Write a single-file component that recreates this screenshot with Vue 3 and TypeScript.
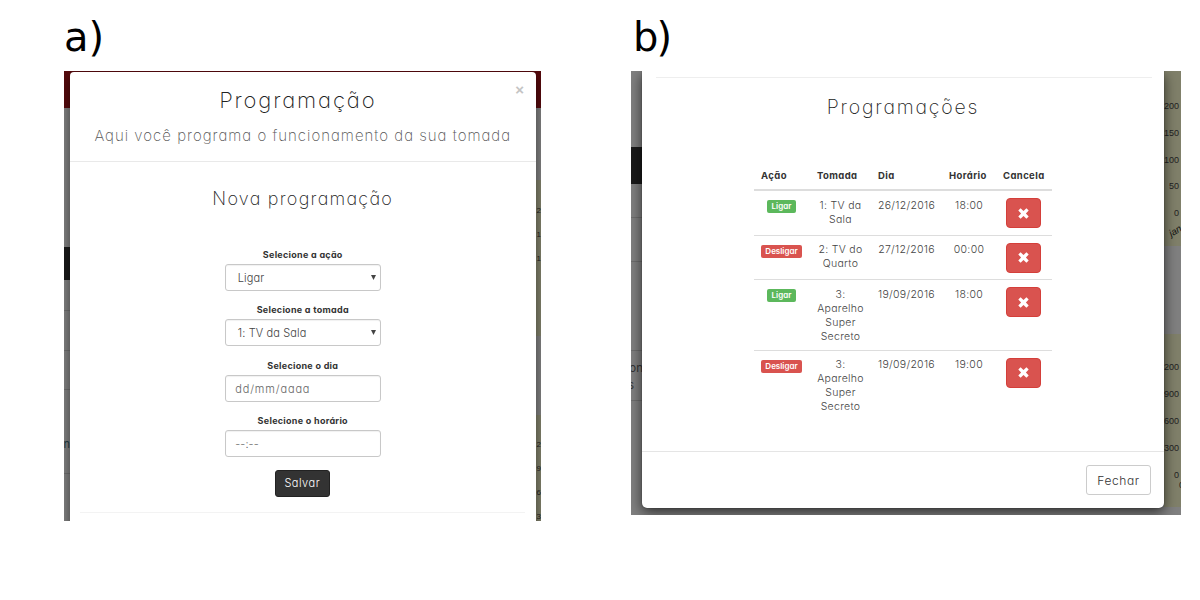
<script setup lang="ts">
interface Field {
  label: string
  value: string
  kind: 'select' | 'input'
}
interface Schedule {
  action: 'Ligar' | 'Desligar'
  outlet: string[]
  day: string
  time: string
}
interface AxisLabel {
  text: string
  y: number
}

const fields: Field[] = [
  { label: 'Selecione a ação', value: 'Ligar', kind: 'select' },
  { label: 'Selecione a tomada', value: '1: TV da Sala', kind: 'select' },
  { label: 'Selecione o dia', value: 'dd/mm/aaaa', kind: 'input' },
  { label: 'Selecione o horário', value: '--:--', kind: 'input' },
]

const schedules: Schedule[] = [
  { action: 'Ligar', outlet: ['1: TV da', 'Sala'], day: '26/12/2016', time: '18:00' },
  { action: 'Desligar', outlet: ['2: TV do', 'Quarto'], day: '27/12/2016', time: '00:00' },
  { action: 'Ligar', outlet: ['3:', 'Aparelho', 'Super', 'Secreto'], day: '19/09/2016', time: '18:00' },
  { action: 'Desligar', outlet: ['3:', 'Aparelho', 'Super', 'Secreto'], day: '19/09/2016', time: '19:00' },
]

const formAxis: AxisLabel[] = [
  { text: '2', y: 140 },
  { text: '1', y: 164 },
  { text: '1', y: 188 },
  { text: '2', y: 374 },
  { text: '9', y: 398 },
  { text: '6', y: 422 },
  { text: '3', y: 446 },
]
const listAxis: AxisLabel[] = [
  { text: '200', y: 35 },
  { text: '150', y: 62 },
  { text: '100', y: 89 },
  { text: '50', y: 115 },
  { text: '0', y: 142 },
  { text: '200', y: 296 },
  { text: '900', y: 323 },
  { text: '600', y: 350 },
  { text: '300', y: 377 },
  { text: '0', y: 404 },
]
</script>

<template>
  <main class="page">
    <figure class="figure figure-form">
      <figcaption>a)</figcaption>
      <section class="panel">
        <div class="backdrop">
          <div class="side side-left">
            <i class="dark"></i><i class="rule r1"></i><i class="rule r2"></i><i class="rule r3"></i><i class="rule r4"></i>
            <span class="cut">n</span>
          </div>
          <div class="side side-right">
            <i class="chart c1"></i><i class="chart c2"></i>
            <span v-for="a in formAxis" :key="a.y" class="axis" :style="{ top: a.y + 'px' }">{{ a.text }}</span>
          </div>
        </div>
        <div class="modal">
          <header>
            <span class="close">×</span>
            <h1>Programação</h1>
            <p>Aqui você programa o funcionamento da sua tomada</p>
          </header>
          <h2>Nova programação</h2>
          <form @submit.prevent>
            <div v-for="f in fields" :key="f.label" class="field">
              <label>{{ f.label }}</label>
              <div class="control" :class="f.kind">
                <span>{{ f.value }}</span>
                <svg v-if="f.kind === 'select'" viewBox="0 0 5 5"><path d="M0 0h5L2.5 5z" /></svg>
              </div>
            </div>
            <button class="save" type="submit">Salvar</button>
          </form>
          <hr />
        </div>
      </section>
    </figure>

    <figure class="figure figure-list">
      <figcaption>b)</figcaption>
      <section class="panel">
        <div class="backdrop">
          <div class="side side-left">
            <i class="dark"></i><i class="rule r1"></i><i class="rule r2"></i><i class="rule r3"></i><i class="rule r4"></i>
            <span class="cut">on</span><span class="cut second">s</span>
          </div>
          <div class="side side-right">
            <i class="chart c1"></i><i class="chart c2"></i>
            <span v-for="a in listAxis" :key="a.y" class="axis" :style="{ top: a.y + 'px' }">{{ a.text }}</span>
            <span class="month">jan</span><span class="axis edge">0</span>
          </div>
        </div>
        <div class="modal">
          <hr />
          <h2>Programações</h2>
          <table>
            <thead>
              <tr><th>Ação</th><th>Tomada</th><th>Dia</th><th>Horário</th><th>Cancela</th></tr>
            </thead>
            <tbody>
              <tr v-for="(s, i) in schedules" :key="i">
                <td><span class="badge" :class="s.action.toLowerCase()">{{ s.action }}</span></td>
                <td class="text"><div v-for="line in s.outlet" :key="line">{{ line }}</div></td>
                <td class="text">{{ s.day }}</td>
                <td class="text">{{ s.time }}</td>
                <td>
                  <button class="cancel" type="button">
                    <svg viewBox="0 0 11 11"><path d="M2.6.3 5.5 3.1 8.4.3 10.7 2.6 7.9 5.5l2.8 2.9-2.3 2.3-2.9-2.8-2.9 2.8L.3 8.4l2.8-2.9L.3 2.6z" /></svg>
                  </button>
                </td>
              </tr>
            </tbody>
          </table>
          <footer><button class="dismiss" type="button">Fechar</button></footer>
        </div>
      </section>
    </figure>
  </main>
</template>

<style>
body { margin: 0; background: #fff; }
</style>

<style scoped>
* { box-sizing: border-box; }
.page {
  display: flex;
  width: 1200px;
  height: 600px;
  padding-left: 64px;
  overflow: hidden;
  background: #fff;
  color: #333;
  font-family: Inter, "Liberation Sans", sans-serif;
  font-feature-settings: "cv11";
  font-weight: 200;
}
.figure { margin: 0; }
.figure-form { width: 477px; margin-right: 90px; }
.figure-list { width: 550px; }
figcaption {
  height: 71px;
  padding-top: 13px;
  color: #000;
  font: 400 40px/48px "DejaVu Sans", sans-serif;
  white-space: nowrap;
}
.figure-list figcaption { padding-left: 2px; letter-spacing: -2px; }
.panel { position: relative; overflow: hidden; background: #808080; }
.figure-form .panel { height: 450px; }
.figure-list .panel { height: 444px; }
.modal { position: relative; background: #fff; }
h1, h2, p { margin: 0; font-weight: 200; text-align: center; white-space: nowrap; }
h1, h2 { color: #222; }
hr { margin: 0; border: 0; border-top: 1px solid #eee; }
button { display: block; padding: 0; font: inherit; }

/* page visible behind the dialogs */
.backdrop, .side { position: absolute; top: 0; bottom: 0; }
.backdrop { left: 0; right: 0; }
.side-left { left: 0; }
.side-right { right: 0; }
.figure-form .side { width: 6px; }
.figure-list .side-left { width: 12px; }
.figure-list .side-right { width: 17px; }
.side i { position: absolute; left: 0; right: 0; }
.figure-form .backdrop { background: linear-gradient(#560a0d 37px, transparent 37px); }
.chart { background: #80806a; }
.dark { background: #1a1a1a; }
.rule { height: 1px; background: #6e6e6e; }
.figure-form .dark { top: 176px; height: 33px; }
.figure-form .r1 { top: 239px; }
.figure-form .r2 { top: 279px; }
.figure-form .r3 { top: 318px; }
.figure-form .r4 { top: 402px; }
.figure-form .c1 { top: 109px; height: 156px; }
.figure-form .c2 { top: 344px; height: 106px; }
.figure-list .dark { top: 76px; height: 37px; }
.figure-list .r1 { top: 146px; }
.figure-list .r2 { top: 190px; }
.figure-list .r3 { top: 279px; }
.figure-list .r4 { top: 329px; }
.figure-list .c1 { top: 0; height: 175px; }
.figure-list .c2 { top: 263px; height: 173px; }
.axis, .cut, .month { position: absolute; line-height: 10px; white-space: nowrap; }
.axis {
  right: 2px;
  margin-top: -5px;
  color: #222;
  font: 400 9px/10px "Liberation Sans", sans-serif;
}
.figure-form .axis { right: 0; font-size: 8px; }
.figure-list .edge { top: 414px; right: -3px; }
.month {
  top: 155px;
  left: 5px;
  color: #111;
  font: italic 400 9.5px/10px "Liberation Sans", sans-serif;
  transform: rotate(-30deg);
}
.cut { right: 0; top: 368px; color: #223b42; font-size: 11px; font-weight: 400; }
.figure-list .cut { top: 292px; right: 0; color: #333; font-size: 11.5px; }
.figure-list .second { top: 309px; right: 9px; }

/* form dialog */
.figure-form .modal {
  width: 466.5px;
  height: 470px;
  margin: 1px 0 0 5.5px;
  border-radius: 4px;
  box-shadow: 0 4px 12px rgba(0, 0, 0, .5);
}
header { position: relative; height: 90px; padding-top: 14px; border-bottom: 1px solid #e9e9e9; }
h1 { padding-right: 10px; font-size: 22px; line-height: 28px; letter-spacing: 1.85px; }
header p { margin-top: 13px; color: #555; font-size: 15px; line-height: 18px; letter-spacing: 1px; }
.close {
  position: absolute;
  top: 9px;
  right: 12px;
  color: #c4c4c4;
  font: 700 15px/18px "Liberation Sans", sans-serif;
}
.figure-form h2 { margin-top: 25px; font-size: 18px; line-height: 24px; letter-spacing: 1.25px; }
form { display: flex; flex-direction: column; align-items: center; margin-top: 38px; }
.field { display: flex; flex-direction: column; align-items: center; height: 55.4px; }
label { font-size: 9px; font-weight: 700; line-height: 12px; letter-spacing: .28px; margin-bottom: 3px; }
.control {
  display: flex;
  align-items: center;
  justify-content: space-between;
  width: 156px;
  height: 27px;
  padding: 1px 4px 0 9.5px;
  border: 1px solid #c8c8c8;
  border-radius: 3px;
  box-shadow: inset 0 1px 1px rgba(0, 0, 0, .06);
  color: #444;
  font-size: 11px;
  font-weight: 300;
  letter-spacing: .12px;
}
.select { padding-left: 12px; }
.input { color: #666; letter-spacing: .85px; }
.field:last-of-type .input { letter-spacing: .1px; }
.control svg { width: 5px; height: 5px; margin-top: -1px; fill: #444; }
.save {
  width: 55px;
  height: 27px;
  margin: -1px 1px 0 0;
  border: 1px solid #222;
  border-radius: 3px;
  background: #333;
  color: #fff;
  font-size: 11px;
  font-weight: 300;
  letter-spacing: .5px;
}
.figure-form hr { margin: 15px 11px 0 10px; border-color: #f3f3f3; }

/* schedule list dialog */
.figure-list .modal {
  width: 522px;
  height: 437px;
  margin-left: 11px;
  border-radius: 0 0 5px 5px;
  box-shadow: 0 4px 13px rgba(0, 0, 0, .65), 0 0 1px rgba(0, 0, 0, .7);
}
.figure-list .modal > hr { position: relative; top: 6px; margin: 0 12px 0 14px; }
.figure-list h2 { margin-top: 23px; font-size: 19.5px; line-height: 24px; letter-spacing: 1.8px; }
table {
  width: 298px;
  margin: 50px 0 0 112px;
  border-collapse: separate;
  border-spacing: 0;
  table-layout: fixed;
  font-size: 10.5px;
  line-height: 14px;
}
th { height: 22px; padding: 0 0 0 7px; border-bottom: 2px solid #ddd; font-size: 9.5px; font-weight: 700; line-height: 14px; letter-spacing: .4px; text-align: left; vertical-align: top; white-space: nowrap; }
th:nth-child(1) { width: 56px; }
th:nth-child(2) { width: 61px; }
th:nth-child(3) { width: 71px; }
th:nth-child(4) { width: 54px; }
th:nth-child(5) { width: 56px; }
td { padding: 7px 0 6.6px; border-top: 1px solid #ddd; text-align: center; vertical-align: top; white-space: nowrap; }
td.text { padding: 7.6px 0 6px; font-weight: 300; letter-spacing: .3px; color: #444; }
tbody tr:first-child td { border-top: 0; }
tbody tr:first-child td.text { padding-top: 8px; }
.badge {
  display: block;
  width: 41px;
  height: 13px;
  margin: 2px 0 0 7px;
  border-radius: 2px;
  background: #d9534f;
  color: #fff;
  font-size: 8px;
  font-weight: 600;
  line-height: 12px;
}
.badge.ligar { width: 29px; margin-left: 13px; background: #5cb85c; }
.cancel {
  display: flex;
  align-items: center;
  justify-content: center;
  width: 35px;
  height: 30px;
  margin: 0 0 0 10px;
  border: 1px solid #d43f3a;
  border-radius: 4px;
  background: #d9534f;
}
.cancel svg { width: 11px; height: 11px; fill: #fff; }
footer {
  position: absolute;
  right: 0;
  bottom: 0;
  left: 0;
  display: flex;
  justify-content: flex-end;
  height: 57px;
  padding: 13px 13px 0 0;
  border-top: 1px solid #e5e5e5;
}
.dismiss {
  width: 65px;
  height: 30px;
  border: 1px solid #ccc;
  border-radius: 3px;
  background: #fff;
  color: #333;
  font-size: 12px;
  font-weight: 300;
  letter-spacing: .6px;
}
</style>
